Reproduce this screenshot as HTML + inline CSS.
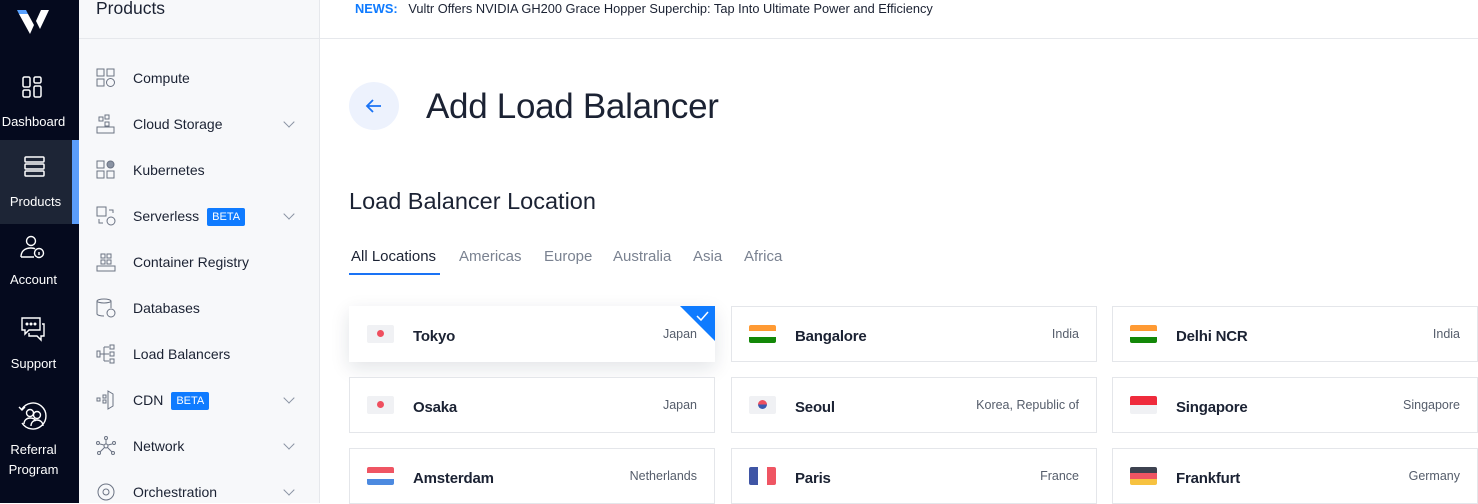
<!DOCTYPE html>
<html><head><meta charset="utf-8"><style>
*{box-sizing:border-box;margin:0;padding:0}
body{width:1478px;height:503px;overflow:hidden;font-family:"Liberation Sans",sans-serif;background:#fff;position:relative}
.abs{position:absolute}
#nav{left:0;top:0;width:79px;height:503px;background:#050a1e}
.ni{position:absolute;left:0;width:79px;text-align:center;color:#fff;font-size:13px}
#prod{left:79px;top:0;width:241px;height:503px;background:#f7f8fa;border-right:1px solid #e6e8ec}
.pi{position:absolute;left:54px;font-size:14px;color:#1b2233}
.pic{position:absolute;left:17px;width:20px;height:20px}
.chev{position:absolute;left:206px;width:8px;height:8px;border-right:1.3px solid #8a93a3;border-bottom:1.3px solid #8a93a3;transform:rotate(45deg)}
.beta{display:inline-block;background:#0f7bff;color:#fff;font-size:11px;padding:3px 5px;margin-left:8px;border-radius:2px;vertical-align:1px}
.card{position:absolute;width:366px;height:56px;border:1px solid #e4e6ea;background:#fff}
.card .f{position:absolute;left:17px;top:18px;width:27px;height:18px;border-radius:2px;overflow:hidden}
.card .n{position:absolute;left:63px;top:21px;font-size:15px;color:#1b2233;font-weight:bold;letter-spacing:-.2px}
.card .c{position:absolute;right:17px;top:20px;font-size:12.5px;color:#555d6b}
.tab{position:absolute;top:248px;font-size:15px;color:#7a8291}
</style></head><body>
<div id="nav" class="abs">
<svg class="abs" style="left:16px;top:8px" width="34" height="28" viewBox="0 0 34 28"><path d="M1 2h9l2 4H3z" fill="#5aa2ff"/><path d="M3 6h9l6 11-4 9z" fill="#fff"/><path d="M20 13l5-11h8l-9 19z" fill="#fff"/></svg>
<svg class="abs" style="left:22px;top:76px" width="22" height="24" viewBox="0 0 22 24" fill="none" stroke="#fff" stroke-width="1.5"><rect x="1" y="1" width="7" height="10" rx="1.5"/><rect x="12" y="1" width="7" height="6" rx="1.5"/><rect x="1" y="14" width="7" height="7" rx="1.5"/><rect x="12" y="10" width="7" height="11" rx="1.5"/></svg>
<div class="ni" style="top:114px;left:-6px">Dashboard</div>
<div class="abs" style="left:0;top:140px;width:79px;height:84px;background:#1d2536"></div>
<div class="abs" style="left:72px;top:140px;width:7px;height:84px;background:#5b9dfa"></div>
<svg class="abs" style="left:24px;top:156px" width="22" height="24" viewBox="0 0 22 24" fill="none" stroke="#fff" stroke-width="1.5"><rect x="1" y="1" width="19" height="5" rx="1"/><rect x="1" y="8" width="19" height="5" rx="1"/><rect x="1" y="15" width="19" height="5" rx="1"/></svg>
<div class="ni" style="top:194px;left:-4px">Products</div>
<svg class="abs" style="left:20px;top:234px" width="26" height="26" viewBox="0 0 26 26" fill="none" stroke="#fff" stroke-width="1.4"><circle cx="11" cy="7" r="4.5"/><path d="M1 23c0-6 4-9 10-9 2 0 3 0 4 1M1 23h13"/><circle cx="19" cy="19" r="4.5"/><path d="M19 18v3"/></svg>
<div class="ni" style="top:272px;left:-6px">Account</div>
<svg class="abs" style="left:20px;top:316px" width="26" height="26" viewBox="0 0 26 26" fill="none" stroke="#fff" stroke-width="1.4"><path d="M2 2h18v12H9l-4 4v-4H2z"/><path d="M22 8h2v12h-3v4l-4-4H9v-3"/><circle cx="7" cy="8" r=".8" fill="#fff"/><circle cx="11" cy="8" r=".8" fill="#fff"/><circle cx="15" cy="8" r=".8" fill="#fff"/></svg>
<div class="ni" style="top:356px;left:-6px">Support</div>
<svg class="abs" style="left:18px;top:400px" width="30" height="32" viewBox="0 0 30 32" fill="none" stroke="#fff" stroke-width="1.4"><path d="M4 9a13 13 0 1 1 0 14M1 7l3 3 3-3"/><circle cx="12" cy="13" r="3.5"/><circle cx="19" cy="15" r="3.5"/><path d="M6 24c0-4 3-6 6-6s5 1 6 3M13 26c0-4 3-6 6-6s6 2 6 6"/></svg>
<div class="ni" style="top:440px;line-height:20px;left:-6px">Referral<br>Program</div>
</div>
<div id="prod" class="abs">
<div class="abs" style="left:17px;top:-2px;font-size:17.5px;color:#1b2233">Products</div>
<div class="abs" style="left:0;top:38px;width:240px;height:1px;background:#e6e8ec"></div>
<svg class="pic" style="top:68px" viewBox="0 0 20 20" fill="none" stroke="#6b7383" stroke-width="1"><rect x="1" y="1" width="7" height="7"/><rect x="11" y="1" width="7" height="7"/><rect x="1" y="11" width="7" height="7"/><circle cx="14.5" cy="14.5" r="4"/></svg>
<div class="pi" style="top:70px">Compute</div>
<svg class="pic" style="top:114px" viewBox="0 0 20 20" fill="none" stroke="#6b7383" stroke-width="1"><rect x="3" y="3" width="4" height="4"/><rect x="9" y="1" width="4" height="4"/><rect x="9" y="8" width="4" height="4"/><rect x="1" y="13" width="17" height="6"/></svg>
<div class="pi" style="top:116px">Cloud Storage</div><div class="chev" style="top:118px"></div>
<svg class="pic" style="top:160px" viewBox="0 0 20 20" fill="none" stroke="#6b7383" stroke-width="1"><rect x="1" y="1" width="7" height="7"/><rect x="1" y="11" width="7" height="7"/><rect x="11" y="11" width="7" height="7"/><circle cx="14.5" cy="4.5" r="3.5" fill="#8a93a3"/></svg>
<div class="pi" style="top:162px">Kubernetes</div>
<svg class="pic" style="top:206px" viewBox="0 0 20 20" fill="none" stroke="#6b7383" stroke-width="1"><rect x="1" y="1" width="9" height="9"/><circle cx="15" cy="15" r="4"/><path d="M13 4h4v3M3 13v4h4"/></svg>
<div class="pi" style="top:208px">Serverless<span class="beta">BETA</span></div><div class="chev" style="top:210px"></div>
<svg class="pic" style="top:252px" viewBox="0 0 20 20" fill="none" stroke="#6b7383" stroke-width="1"><rect x="5" y="2" width="4" height="4"/><rect x="11" y="2" width="4" height="4"/><rect x="5" y="8" width="4" height="4"/><rect x="11" y="8" width="4" height="4"/><path d="M1 14h18v5H1z"/></svg>
<div class="pi" style="top:254px">Container Registry</div>
<svg class="pic" style="top:298px" viewBox="0 0 20 20" fill="none" stroke="#6b7383" stroke-width="1"><ellipse cx="8" cy="3" rx="7" ry="2"/><path d="M1 3v13c0 1 3 2 7 2M15 3v7"/><circle cx="15" cy="15" r="4"/></svg>
<div class="pi" style="top:300px">Databases</div>
<svg class="pic" style="top:344px" viewBox="0 0 20 20" fill="none" stroke="#6b7383" stroke-width="1"><rect x="1" y="7" width="3" height="6"/><path d="M4 10h4M8 3v14M8 3h5M8 10h5M8 17h5"/><rect x="14" y="1" width="4" height="4"/><rect x="14" y="8" width="4" height="4"/><rect x="14" y="15" width="4" height="4"/></svg>
<div class="pi" style="top:346px">Load Balancers</div>
<svg class="pic" style="top:390px" viewBox="0 0 20 20" fill="none" stroke="#6b7383" stroke-width="1"><path d="M12 1l5 3v12l-5 3z"/><rect x="7" y="5" width="3" height="3"/><rect x="7" y="10" width="3" height="3"/><rect x="1" y="8" width="3" height="3"/></svg>
<div class="pi" style="top:392px">CDN<span class="beta">BETA</span></div><div class="chev" style="top:394px"></div>
<svg class="pic" style="top:436px" viewBox="0 0 20 20" fill="none" stroke="#6b7383" stroke-width="1"><circle cx="10" cy="10" r="2"/><circle cx="10" cy="2" r="1.5"/><circle cx="2" cy="7" r="1.5"/><circle cx="18" cy="7" r="1.5"/><circle cx="3" cy="17" r="1.5"/><circle cx="17" cy="17" r="1.5"/><path d="M10 4v4M4 8l4 1M16 8l-4 1M4 16l5-5M16 16l-5-5"/></svg>
<div class="pi" style="top:438px">Network</div><div class="chev" style="top:440px"></div>
<svg class="pic" style="top:482px" viewBox="0 0 20 20" fill="none" stroke="#6b7383" stroke-width="1"><circle cx="10" cy="10" r="8"/><circle cx="10" cy="10" r="3"/></svg>
<div class="pi" style="top:484px">Orchestration</div><div class="chev" style="top:486px"></div>
</div>
<div class="abs" style="left:355px;top:1px;font-size:12.8px;color:#1b2233"><b style="color:#0f7bff">NEWS:</b>&nbsp;&nbsp; Vultr Offers NVIDIA GH200 Grace Hopper Superchip: Tap Into Ultimate Power and Efficiency</div>
<div class="abs" style="left:320px;top:38px;width:1158px;height:1px;background:#e6e8ec"></div>
<div class="abs" style="left:349px;top:82px;width:50px;height:48px;border-radius:50%;background:#edf2fd"></div>
<svg class="abs" style="left:365px;top:97px" width="18" height="18" viewBox="0 0 18 18" fill="none" stroke="#1a73f5" stroke-width="1.8"><path d="M16 9H2M8 3L2 9l6 6"/></svg>
<div class="abs" style="left:426px;top:87px;font-size:35px;font-weight:300;color:#1b2233;letter-spacing:-.3px">Add Load Balancer</div>
<div class="abs" style="left:349px;top:188px;font-size:23.5px;color:#1b2233">Load Balancer Location</div>
<div class="tab" style="left:351px;color:#1b2233">All Locations</div>
<div class="abs" style="left:349px;top:273px;width:91px;height:2px;background:#1a73f5"></div>
<div class="tab" style="left:459px">Americas</div>
<div class="tab" style="left:544px">Europe</div>
<div class="tab" style="left:613px">Australia</div>
<div class="tab" style="left:693px">Asia</div>
<div class="tab" style="left:744px">Africa</div>

<div class="card" style="left:349px;top:306px;border-color:#fff;box-shadow:0 6px 18px rgba(20,30,60,.12)"><div class="f" style="background:#f0f1f4"><div style="position:absolute;left:10px;top:5px;width:7px;height:7px;border-radius:50%;background:#ef4f5f"></div></div><div class="n">Tokyo</div><div class="c" style="right:17px">Japan</div>
<svg class="abs" style="right:-1px;top:-1px" width="35" height="35" viewBox="0 0 35 35"><path d="M0 0h35v35z" fill="#0f7bff"/><path d="M17 10l4 4 7-8" fill="none" stroke="#fff" stroke-width="1.5"/></svg></div>
<div class="card" style="left:731px;top:306px"><div class="f"><div style="height:6px;background:#ff9a33"></div><div style="height:6px;background:#fff"></div><div style="height:6px;background:#138808"></div></div><div class="n">Bangalore</div><div class="c">India</div></div>
<div class="card" style="left:1112px;top:306px"><div class="f"><div style="height:6px;background:#ff9a33"></div><div style="height:6px;background:#fff"></div><div style="height:6px;background:#138808"></div></div><div class="n">Delhi NCR</div><div class="c">India</div></div>

<div class="card" style="left:349px;top:377px"><div class="f" style="background:#f0f1f4"><div style="position:absolute;left:10px;top:5px;width:7px;height:7px;border-radius:50%;background:#ef4f5f"></div></div><div class="n">Osaka</div><div class="c">Japan</div></div>
<div class="card" style="left:731px;top:377px"><div class="f" style="background:#f0f1f4"><div style="position:absolute;left:9px;top:4px;width:9px;height:9px;border-radius:50%;background:linear-gradient(#ef4f5f 50%,#3a5ab0 50%)"></div></div><div class="n">Seoul</div><div class="c">Korea, Republic of</div></div>
<div class="card" style="left:1112px;top:377px"><div class="f"><div style="height:9px;background:#ef2b3c"></div><div style="height:9px;background:#f0f1f4"></div></div><div class="n">Singapore</div><div class="c">Singapore</div></div>

<div class="card" style="left:349px;top:448px"><div class="f"><div style="height:6px;background:#ef5563"></div><div style="height:6px;background:#fff"></div><div style="height:6px;background:#4c8ae0"></div></div><div class="n">Amsterdam</div><div class="c">Netherlands</div></div>
<div class="card" style="left:731px;top:448px"><div class="f" style="display:flex"><div style="flex:1;background:#3f55a5"></div><div style="flex:1;background:#fff"></div><div style="flex:1;background:#ef5563"></div></div><div class="n">Paris</div><div class="c">France</div></div>
<div class="card" style="left:1112px;top:448px"><div class="f"><div style="height:6px;background:#3d4250"></div><div style="height:6px;background:#ef5563"></div><div style="height:6px;background:#f7c240"></div></div><div class="n">Frankfurt</div><div class="c">Germany</div></div>
</body></html>
